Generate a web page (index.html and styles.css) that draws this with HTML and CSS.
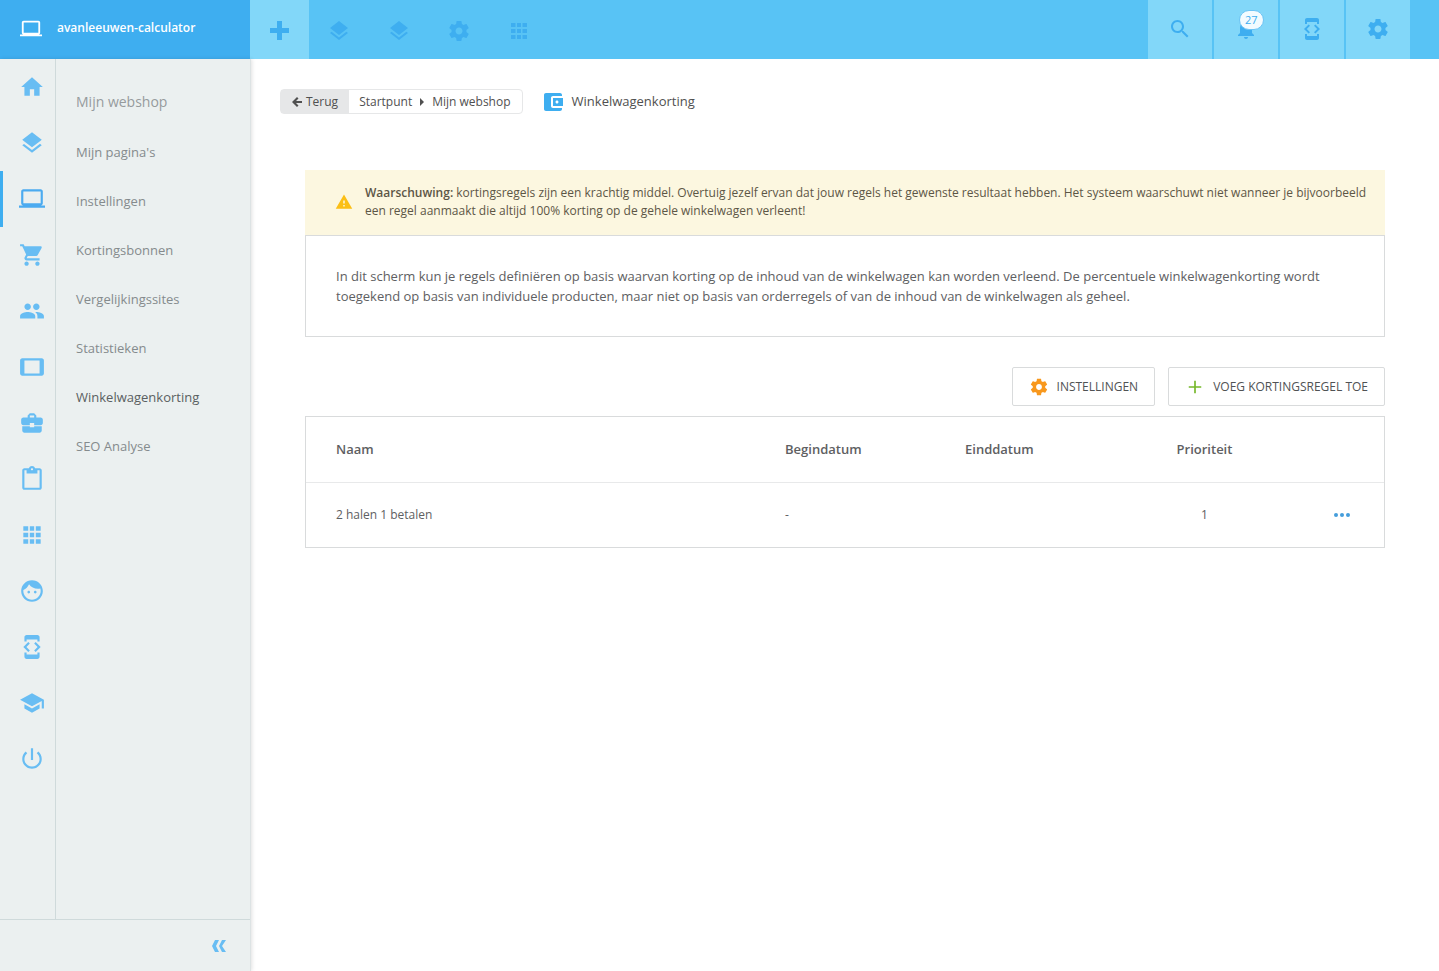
FILE: index.html
```html
<!DOCTYPE html>
<html lang="nl">
<head>
<meta charset="utf-8">
<title>Winkelwagenkorting</title>
<meta name="viewport" content="width=device-width, initial-scale=1">
<link rel="stylesheet" href="styles.css">
</head>
<body>
<svg class="sprite" aria-hidden="true">
  <symbol id="i-home" viewBox="0 0 24 24"><path d="M10 20v-6h4v6h5v-8h3L12 3 2 12h3v8z"/></symbol>
  <symbol id="i-layers" viewBox="0 0 24 24"><path d="M11.99 18.54l-7.37-5.73L3 14.07l9 7 9-7-1.63-1.27-7.38 5.74zM12 16l7.36-5.73L21 9l-9-7-9 7 1.63 1.27L12 16z"/></symbol>
  <symbol id="i-laptop" viewBox="0 0 24 24"><path d="M20 18c1.1 0 1.99-.9 1.99-2L22 5c0-1.1-.9-2-2-2H4c-1.1 0-2 .9-2 2v11c0 1.1.9 2 2 2H0v2h24v-2h-4zM4 5h16v11H4V5z"/></symbol>
  <symbol id="i-cart" viewBox="0 0 24 24"><path d="M7 18c-1.1 0-1.99.9-1.99 2S5.900 22 7 22s2-.9 2-2-.9-2-2-2zM1 2v2h2l3.600 7.590-1.350 2.450c-.16.28-.25.61-.25.96 0 1.100.9 2 2 2h12v-2H7.420c-.14 0-.25-.11-.25-.25l.03-.12.9-1.630h7.450c.75 0 1.410-.41 1.750-1.030l3.580-6.490c.08-.14.12-.31.12-.48 0-.55-.45-1-1-1H5.210l-.94-2H1zm16 16c-1.100 0-1.990.9-1.990 2s.89 2 1.990 2 2-.9 2-2-.9-2-2-2z"/></symbol>
  <symbol id="i-people" viewBox="0 0 24 24"><path d="M16 11c1.660 0 2.990-1.340 2.990-3S17.660 5 16 5s-3 1.340-3 3 1.340 3 3 3zm-8 0c1.660 0 2.990-1.340 2.990-3S9.660 5 8 5 5 6.340 5 8s1.340 3 3 3zm0 2c-2.330 0-7 1.170-7 3.500V19h14v-2.500c0-2.330-4.670-3.500-7-3.500zm8 0c-.29 0-.62.02-.97.05 1.160.84 1.970 1.970 1.970 3.450V19h6v-2.500c0-2.330-4.670-3.500-7-3.500z"/></symbol>
  <symbol id="i-tablet" viewBox="0 0 24 24"><path d="M21 4H3c-1.100 0-2 .9-2 2v12c0 1.100.9 2 2 2h18c1.100 0 1.990-.9 1.990-2L23 6c0-1.100-.9-2-2-2zm-2 14H5V6h14v12z"/></symbol>
  <symbol id="i-case" viewBox="0 0 24 24"><path d="M10 16v-1H3.010L3 19c0 1.110.89 2 2 2h14c1.110 0 2-.89 2-2v-4h-7v1h-4zm10-9h-4.010V5l-2-2h-4l-2 2v2H4c-1.100 0-2 .9-2 2v3c0 1.110.89 2 2 2h6v-2h4v2h6c1.100 0 2-.9 2-2V9c0-1.100-.9-2-2-2zm-6 0h-4V5h4v2z"/></symbol>
  <symbol id="i-clip" viewBox="0 0 24 24"><path d="M19 2h-4.180C14.400.84 13.300 0 12 0c-1.300 0-2.400.84-2.820 2H5c-1.100 0-2 .9-2 2v16c0 1.100.9 2 2 2h14c1.100 0 2-.9 2-2V4c0-1.100-.9-2-2-2zm-7 0c.55 0 1 .45 1 1s-.45 1-1 1-1-.45-1-1 .45-1 1-1zm7 18H5V4h2v3h10V4h2v16z"/></symbol>
  <symbol id="i-apps" viewBox="0 0 24 24"><path d="M4 4h4.500v4H4zM10 4h4v4h-4zM15.500 4H20v4h-4.500zM4 10h4.500v4H4zM10 10h4v4h-4zM15.500 10H20v4h-4.500zM4 16h4.500v4H4zM10 16h4v4h-4zM15.500 16H20v4h-4.500z"/></symbol>
  <symbol id="i-face" viewBox="0 0 24 24"><path d="M9 11.750c-.69 0-1.250.56-1.250 1.250s.56 1.250 1.250 1.250 1.250-.56 1.250-1.250-.56-1.250-1.250-1.250zm6 0c-.69 0-1.250.56-1.250 1.250s.56 1.250 1.250 1.250 1.250-.56 1.250-1.250-.56-1.250-1.250-1.250zM12 2C6.480 2 2 6.480 2 12s4.480 10 10 10 10-4.480 10-10S17.520 2 12 2zm0 18c-4.410 0-8-3.590-8-8 0-.29.02-.58.05-.86 2.360-1.050 4.230-2.980 5.210-5.370C11.070 8.330 14.050 10 17.420 10c.78 0 1.530-.09 2.250-.26.21.71.33 1.470.33 2.260 0 4.410-3.590 8-8 8z"/></symbol>
  <symbol id="i-dev" viewBox="0 0 24 24"><path d="M7 5h10v2h2V3c0-1.100-.9-1.990-2-1.990L7 1c-1.100 0-2 .9-2 2v4h2V5zm8.410 11.590L20 12l-4.590-4.590L14 8.830 17.170 12 14 15.170l1.410 1.420zM10 15.170L6.830 12 10 8.830 8.590 7.410 4 12l4.590 4.590L10 15.170zM17 19H7v-2H5v4c0 1.100.9 2 2 2h10c1.100 0 2-.9 2-2v-4h-2v2z"/></symbol>
  <symbol id="i-school" viewBox="0 0 24 24"><path d="M5 13.180v4L12 21l7-3.820v-4L12 17l-7-3.820zM12 3L1 9l11 6 9-4.910V17h2V9L12 3z"/></symbol>
  <symbol id="i-power" viewBox="0 0 24 24"><path d="M13 2h-2v11h2V2zm4.830 3.170l-1.420 1.420C17.990 7.860 19 9.810 19 12c0 3.870-3.130 7-7 7s-7-3.130-7-7c0-2.190 1.010-4.140 2.580-5.420L6.170 5.170C4.230 6.820 3 9.260 3 12c0 4.970 4.030 9 9 9s9-4.030 9-9c0-2.740-1.230-5.180-3.170-6.830z"/></symbol>
  <symbol id="i-gear" viewBox="0 0 24 24"><path d="M19.430 12.980c.04-.32.07-.64.07-.98s-.03-.66-.07-.98l2.110-1.650c.19-.15.24-.42.12-.64l-2-3.460c-.12-.22-.39-.3-.61-.22l-2.490 1c-.52-.4-1.080-.73-1.690-.98l-.38-2.650C14.460 2.180 14.250 2 14 2h-4c-.25 0-.46.18-.49.42l-.38 2.650c-.61.25-1.170.59-1.690.98l-2.490-1c-.23-.09-.49 0-.61.22l-2 3.460c-.13.22-.07.49.12.64l2.110 1.650c-.04.32-.07.65-.07.98s.03.66.07.98l-2.110 1.650c-.19.15-.24.42-.12.64l2 3.460c.12.22.39.3.61.22l2.490-1c.52.4 1.080.73 1.690.98l.38 2.650c.03.24.24.42.49.42h4c.25 0 .46-.18.49-.42l.38-2.650c.61-.25 1.170-.59 1.690-.98l2.490 1c.23.09.49 0 .61-.22l2-3.460c.12-.22.07-.49-.12-.64l-2.110-1.650zM12 15.500c-1.930 0-3.500-1.570-3.500-3.500s1.570-3.500 3.500-3.500 3.500 1.570 3.500 3.500-1.570 3.500-3.500 3.500z"/></symbol>
  <symbol id="i-search" viewBox="0 0 24 24"><path d="M15.500 14h-.79l-.28-.27C15.410 12.590 16 11.110 16 9.500 16 5.910 13.090 3 9.500 3S3 5.910 3 9.500 5.910 16 9.500 16c1.610 0 3.090-.59 4.230-1.570l.27.28v.79l5 4.990L20.490 19l-4.990-5zm-6 0C7.010 14 5 11.990 5 9.500S7.010 5 9.500 5 14 7.010 14 9.500 11.990 14 9.500 14z"/></symbol>
  <symbol id="i-bell" viewBox="0 0 24 24"><path d="M12 22c1.100 0 2-.9 2-2h-4c0 1.100.89 2 2 2zm6-6v-5c0-3.070-1.640-5.640-4.500-6.320V4c0-.83-.67-1.500-1.500-1.500s-1.500.67-1.500 1.500v.68C7.630 5.360 6 7.920 6 11v5l-2 2v1h16v-1l-2-2z"/></symbol>
  <symbol id="i-cross" viewBox="0 0 19 19"><path d="M7 0h5v7h7v5h-7v7H7v-7H0V7h7z"/></symbol>
  <symbol id="i-plus" viewBox="0 0 24 24"><path d="M19.500 13H13v6.500h-2V13H4.500v-2H11V4.500h2V11h6.500v2z"/></symbol>
  <symbol id="i-wallet" viewBox="0 0 24 24"><path d="M21 18v1c0 1.100-.9 2-2 2H5c-1.110 0-2-.9-2-2V5c0-1.100.89-2 2-2h14c1.100 0 2 .9 2 2v1h-9c-1.110 0-2 .9-2 2v8c0 1.100.89 2 2 2h9zm-9-2h10V8H12v8zm4-2.500c-.83 0-1.500-.67-1.500-1.500s.67-1.500 1.500-1.500 1.500.67 1.500 1.500-.67 1.500-1.500 1.500z"/></symbol>
  <symbol id="i-warning" viewBox="0 0 24 24"><path d="M1 21h22L12 2 1 21zm12-3h-2v-2h2v2zm0-4h-2v-4h2v4z"/></symbol>
  <symbol id="i-back" viewBox="0 0 10 10"><path d="M5 0l1.500 1.500L4 4h6v2H4l2.500 2.500L5 10 0 5z"/></symbol>
  <symbol id="i-caret" viewBox="0 0 4 8"><path d="M0 0l4 4-4 4z"/></symbol>
  <symbol id="i-collapse" viewBox="0 0 14 12"><path d="M3 0h4L4 6l3 6H3L0 6zM10 0h4l-4 6 4 6h-4L7 6z"/></symbol>
  <symbol id="i-dots" viewBox="0 0 16 4"><circle cx="2" cy="2" r="2"/><circle cx="8" cy="2" r="2"/><circle cx="14" cy="2" r="2"/></symbol>
</svg>

<header class="topbar">
  <a class="brand" href="#"><svg class="icon icon-22"><use href="#i-laptop"/></svg><span>avanleeuwen-calculator</span></a>
  <button class="top-add" type="button" aria-label="Toevoegen"><svg class="cross"><use href="#i-cross"/></svg></button>
  <nav class="shortcuts" aria-label="Snelkoppelingen">
    <a href="#" aria-label="Pagina's"><svg class="icon"><use href="#i-layers"/></svg></a>
    <a href="#" aria-label="Lagen"><svg class="icon"><use href="#i-layers"/></svg></a>
    <a href="#" aria-label="Instellingen"><svg class="icon"><use href="#i-gear"/></svg></a>
    <a href="#" aria-label="Apps"><svg class="icon"><use href="#i-apps"/></svg></a>
  </nav>
  <div class="tools">
    <button type="button" aria-label="Zoeken"><svg class="icon"><use href="#i-search"/></svg></button>
    <button type="button" aria-label="Meldingen"><svg class="icon"><use href="#i-bell"/></svg><span class="badge">27</span></button>
    <button type="button" aria-label="Ontwikkelaar"><svg class="icon"><use href="#i-dev"/></svg></button>
    <button type="button" aria-label="Instellingen"><svg class="icon"><use href="#i-gear"/></svg></button>
  </div>
</header>

<div class="shell">
  <aside class="sidebar">
    <div class="menus">
      <nav class="rail" aria-label="Hoofdmenu">
        <a href="#" aria-label="Home"><svg class="icon icon-26"><use href="#i-home"/></svg></a>
        <a href="#" aria-label="Pagina's"><svg class="icon icon-26"><use href="#i-layers"/></svg></a>
        <a class="active" href="#" aria-label="Mijn webshop"><svg class="icon icon-26"><use href="#i-laptop"/></svg></a>
        <a href="#" aria-label="Bestellingen"><svg class="icon icon-26"><use href="#i-cart"/></svg></a>
        <a href="#" aria-label="Klanten"><svg class="icon icon-26"><use href="#i-people"/></svg></a>
        <a href="#" aria-label="Kassa"><svg class="icon icon-26"><use href="#i-tablet"/></svg></a>
        <a href="#" aria-label="Zakelijk"><svg class="icon icon-26"><use href="#i-case"/></svg></a>
        <a href="#" aria-label="Klembord"><svg class="icon icon-26"><use href="#i-clip"/></svg></a>
        <a href="#" aria-label="Apps"><svg class="icon icon-26"><use href="#i-apps"/></svg></a>
        <a href="#" aria-label="Account"><svg class="icon icon-26"><use href="#i-face"/></svg></a>
        <a href="#" aria-label="Ontwikkelaar"><svg class="icon icon-26"><use href="#i-dev"/></svg></a>
        <a href="#" aria-label="Leren"><svg class="icon icon-26"><use href="#i-school"/></svg></a>
        <a href="#" aria-label="Uitloggen"><svg class="icon icon-26"><use href="#i-power"/></svg></a>
      </nav>
      <nav class="submenu" aria-labelledby="submenu-title">
        <h2 id="submenu-title">Mijn webshop</h2>
        <a href="#">Mijn pagina's</a>
        <a href="#">Instellingen</a>
        <a href="#">Kortingsbonnen</a>
        <a href="#">Vergelijkingssites</a>
        <a href="#">Statistieken</a>
        <a class="active" href="#">Winkelwagenkorting</a>
        <a href="#">SEO Analyse</a>
      </nav>
    </div>
    <div class="sidebar-foot">
      <button type="button" aria-label="Menu inklappen"><svg class="collapse-icon"><use href="#i-collapse"/></svg></button>
    </div>
  </aside>

  <main class="main">
    <div class="crumb-row">
      <nav class="crumbs" aria-label="Kruimelpad">
        <a class="back" href="#"><svg class="back-icon"><use href="#i-back"/></svg>Terug</a>
        <div class="path"><a href="#">Startpunt</a><svg class="caret"><use href="#i-caret"/></svg><a href="#">Mijn webshop</a></div>
      </nav>
      <h1><svg class="icon"><use href="#i-wallet"/></svg><span>Winkelwagenkorting</span></h1>
    </div>

    <div class="content">
      <div class="alert">
        <svg class="alert-icon"><use href="#i-warning"/></svg>
        <p><strong>Waarschuwing:</strong> kortingsregels zijn een krachtig middel. Overtuig jezelf ervan dat jouw regels het gewenste resultaat hebben. Het systeem waarschuwt niet wanneer je bijvoorbeeld een regel aanmaakt die altijd 100% korting op de gehele winkelwagen verleent!</p>
      </div>
      <div class="intro">
        <p>In dit scherm kun je regels definiëren op basis waarvan korting op de inhoud van de winkelwagen kan worden verleend. De percentuele winkelwagenkorting wordt toegekend op basis van individuele producten, maar niet op basis van orderregels of van de inhoud van de winkelwagen als geheel.</p>
      </div>
      <div class="actions">
        <button class="btn" type="button"><svg class="icon icon-20 orange"><use href="#i-gear"/></svg>INSTELLINGEN</button>
        <button class="btn" type="button"><svg class="icon icon-20 green"><use href="#i-plus"/></svg>VOEG KORTINGSREGEL TOE</button>
      </div>
      <table class="rules">
        <thead>
          <tr><th class="name">Naam</th><th class="begin">Begindatum</th><th class="end">Einddatum</th><th class="prio">Prioriteit</th><th class="more"></th></tr>
        </thead>
        <tbody>
          <tr><td class="name">2 halen 1 betalen</td><td>-</td><td></td><td class="prio">1</td><td class="more"><button type="button" aria-label="Meer opties"><svg class="dots"><use href="#i-dots"/></svg></button></td></tr>
        </tbody>
      </table>
    </div>
  </main>
</div>
</body>
</html>
```
FILE: styles.css
```css
* { box-sizing: border-box; }

body {
  margin: 0;
  min-height: 100vh;
  display: flex;
  flex-direction: column;
  background: #fff;
  color: #505050;
  font-family: "Open Sans", "Noto Sans", sans-serif;
  font-size: 13px;
}

a { color: inherit; text-decoration: none; }
h1, h2, p { margin: 0; font-weight: 400; }
button { margin: 0; padding: 0; border: 0; background: none; color: inherit; font: inherit; cursor: pointer; }
svg { display: block; flex: none; fill: currentColor; }

.sprite { position: absolute; width: 0; height: 0; }
.icon { width: 24px; height: 24px; }
.icon-20 { width: 20px; height: 20px; }
.icon-22 { width: 22px; height: 22px; }
.icon-26 { width: 26px; height: 26px; }
.orange { color: #f8981d; }
.green { color: #76b82a; }

/* Top bar */
.topbar {
  display: flex;
  height: 59px;
  padding-right: 29px;
  background: #58c3f5;
  color: #3eaef0;
}
.brand {
  display: flex;
  align-items: center;
  gap: 15px;
  width: 250px;
  padding: 0 20px 2px;
  background: #3eaef0;
  color: #fff;
  font-size: 12px;
  font-weight: 600;
}
.brand span { padding-bottom: 2px; }
.top-add {
  display: flex;
  align-items: center;
  justify-content: center;
  width: 59px;
  padding-top: 2px;
  background: #82d7f9;
}
.cross { width: 19px; height: 19px; }
.shortcuts { display: flex; }
.shortcuts a {
  display: flex;
  align-items: center;
  justify-content: center;
  width: 60px;
  padding-top: 3px;
}
.tools { display: flex; gap: 2px; margin-left: auto; }
.tools button {
  position: relative;
  display: flex;
  align-items: center;
  justify-content: center;
  width: 64px;
  padding-bottom: 2px;
  background: #82d7f9;
}
.badge {
  position: absolute;
  top: 10px;
  left: 25px;
  padding: 0 5px;
  border: 1px solid #6cc4f5;
  border-radius: 10px;
  background: #f2fbff;
  font-size: 11px;
  line-height: 18px;
}

/* Sidebar */
.shell { display: flex; flex: 1; }
.sidebar {
  display: flex;
  flex-direction: column;
  width: 251px;
  border-right: 1px solid #dde3e4;
  background: #ebf0f0;
  box-shadow: 1px 0 4px rgba(0, 0, 0, 0.12);
}
.menus { display: flex; flex: 1; }
.rail {
  width: 56px;
  border-right: 1px solid #cfdadb;
  color: #68bdf3;
}
.rail a {
  display: flex;
  align-items: center;
  height: 56px;
  padding-left: 16px;
  border-left: 3px solid transparent;
}
.rail .active { border-color: #3eaef0; color: #4cabf0; }
.submenu { padding: 33px 20px 0; color: #858b8d; }
.submenu h2 { margin-bottom: 16px; color: #969b9d; font-size: 14px; line-height: 20px; }
.submenu a { display: block; line-height: 49px; }
.submenu .active { color: #5a5f61; }
.sidebar-foot {
  display: flex;
  align-items: center;
  justify-content: flex-end;
  height: 52px;
  padding-right: 24px;
  border-top: 1px solid #cfdadb;
  color: #68bdf3;
}
.collapse-icon { width: 14px; height: 12px; }

/* Main column */
.main { flex: 1; min-width: 0; padding: 30px 54px 30px 29px; }
.crumb-row { display: flex; align-items: center; gap: 18px; }
.crumbs {
  display: flex;
  border: 1px solid #e6e7e8;
  border-radius: 4px;
  font-size: 12px;
  line-height: 23px;
}
.back {
  display: flex;
  align-items: center;
  gap: 4px;
  padding: 0 11px;
  background: #e6e7e8;
}
.back-icon { width: 10px; height: 10px; }
.path { display: flex; align-items: center; gap: 8px; padding: 0 11px 0 10px; }
.caret { width: 4px; height: 8px; }
.crumb-row h1 { display: flex; align-items: center; gap: 7px; font-size: 13px; line-height: 20px; }
.crumb-row h1 .icon { color: #3eaef0; }
.crumb-row h1 span { padding-bottom: 2px; }

.content { padding: 56px 0 0 25px; }
.alert {
  display: flex;
  align-items: center;
  gap: 12px;
  padding: 14px 16px 15px 30px;
  background: #fcf7e0;
  color: #5c5646;
  font-size: 12px;
  line-height: 18px;
}
.alert strong { font-weight: 600; }
.alert-icon { width: 18px; height: 18px; color: #fbbf16; }
.intro {
  padding: 30px;
  border: 1px solid #d9dbdc;
  color: #5e6062;
  line-height: 20px;
}
.actions { display: flex; justify-content: flex-end; gap: 13px; margin: 30px 0 10px; }
.btn {
  display: flex;
  align-items: center;
  gap: 8px;
  height: 39px;
  padding: 0 16px;
  border: 1px solid #d9dbdc;
  border-radius: 2px;
  color: #505254;
  font-size: 12px;
}

.rules {
  width: 100%;
  table-layout: fixed;
  border: 1px solid #d9dbdc;
  border-spacing: 0;
  color: #5e6062;
  font-size: 12px;
}
.rules th, .rules td { height: 64px; padding: 0 0 1px; text-align: left; }
.rules th { height: 66px; border-bottom: 1px solid #e8e9ea; font-size: 13px; font-weight: 600; }
.rules .name { padding-left: 30px; }
.rules .begin { width: 180px; }
.rules .end { width: 150px; }
.rules .prio { width: 179px; text-align: center; }
.rules .more { width: 90px; }
.more button { display: block; padding: 8px 40px; color: #459ddb; }
.dots { width: 16px; height: 4px; }
```
